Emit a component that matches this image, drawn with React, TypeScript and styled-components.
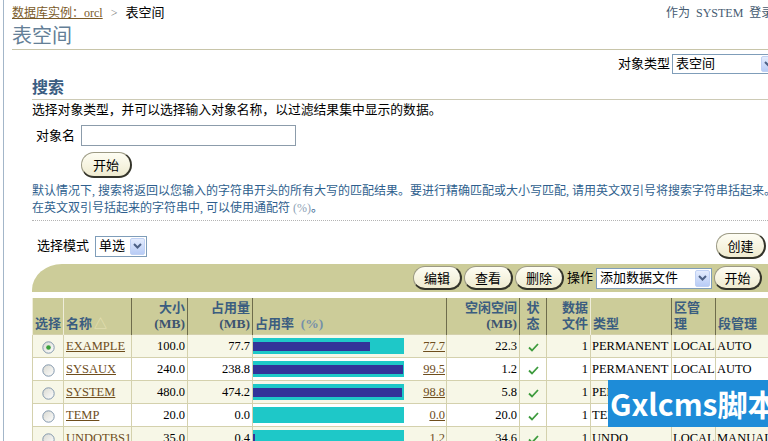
import React from "react";
import styled, { createGlobalStyle } from "styled-components";

const GlobalStyle = createGlobalStyle`
  html, body { margin: 0; padding: 0; background: #fff; overflow: hidden; }
  body {
    font-family: "Liberation Serif", "Noto Sans CJK SC", serif;
    font-size: 13px;
    color: #000;
  }
  #root { width: 768px; height: 441px; overflow: hidden; }
`;

const CJK = `"Liberation Serif", "Noto Sans CJK SC", serif`;

const Root = styled.div`
  position: relative;
  width: 768px;
  height: 441px;
  overflow: hidden;
`;

const Page = styled.div`
  width: 788px;
  min-height: 441px;
  margin-left: 3px;
  border-left: 1px solid #a3b6c9;
  padding-left: 8px;
  font-family: ${CJK};
`;

const TopRow = styled.div`
  display: flex;
  justify-content: space-between;
  padding-top: 5px;
  height: 16px;
  line-height: 16px;
`;

const Crumbs = styled.div`
  display: flex;
  gap: 8px;
  white-space: nowrap;
  font-size: 12px;
`;

const CrumbLink = styled.a`
  color: #7a5a28;
  text-decoration: underline;
`;

const CrumbSep = styled.span`
  color: #777;
`;

const CrumbCurrent = styled.span`
  font-size: 13px;
`;

const Login = styled.div`
  width: 134px;
  color: #445a70;
  white-space: nowrap;
  word-spacing: 3px;
  font-size: 12px;
`;

const Title = styled.h1`
  margin: 2px 0 0;
  font-size: 20px;
  font-weight: normal;
  line-height: 26px;
  color: #647f97;
  border-bottom: 1px solid #c8c5a9;
`;

const TypeRow = styled.div`
  display: flex;
  justify-content: flex-end;
  align-items: center;
  gap: 2px;
  margin-top: 4px;
  padding-right: 22px;
  height: 20px;
`;

const Label = styled.span`
  white-space: nowrap;
  line-height: 16px;
`;

const SelectBox = styled.span<{ $w: number; $h: number }>`
  display: inline-flex;
  align-items: center;
  box-sizing: border-box;
  width: ${(p) => p.$w}px;
  height: ${(p) => p.$h}px;
  border: 1px solid #7f9db9;
  background: #fff;
  padding: 1px 1px 1px 3px;
  line-height: 16px;
  flex-shrink: 0;
`;

const SelectText = styled.span`
  flex: 1;
  white-space: nowrap;
  overflow: hidden;
`;

const SelectArrow = styled.span`
  box-sizing: border-box;
  width: 15px;
  height: 100%;
  background: linear-gradient(#e4ecfd, #b8ccf6);
  border: 1px solid #c0d1f4;
  border-radius: 2px;
  display: flex;
  align-items: center;
  justify-content: center;
`;

const Section = styled.div`
  margin-left: 20px;
  width: 744px;
`;

const SectionTitle = styled.h2`
  margin: 3px 0 0;
  font-size: 16px;
  font-weight: bold;
  line-height: 22px;
  color: #3a5d82;
  border-bottom: 1px solid #cdcab5;
`;

const Desc = styled.div`
  margin-top: 3px;
  line-height: 15px;
  font-size: 12.8px;
  white-space: nowrap;
`;

const FieldRow = styled.div`
  display: flex;
  align-items: center;
  margin-top: 7px;
  padding-left: 4px;
`;

const FieldLabel = styled.span`
  width: 45px;
  line-height: 16px;
`;

const TextInput = styled.input`
  box-sizing: border-box;
  width: 215px;
  height: 21px;
  border: 1px solid #8c9cab;
  margin: 0;
  padding: 0 2px;
`;

const GoRow = styled.div`
  margin-top: 6px;
  padding-left: 49px;
`;

const PillButton = styled.button<{ $h?: number; $w?: number }>`
  box-sizing: border-box;
  height: ${(p) => p.$h ?? 26}px;
  width: ${(p) => p.$w ?? 51}px;
  padding: 0;
  border: 1px solid #9c9a84;
  border-right: 2px solid #34342a;
  border-bottom: 2px solid #34342a;
  border-radius: 14px;
  background: linear-gradient(#fefdf3, #efebd0);
  font-family: "Noto Sans CJK SC", sans-serif;
  font-size: 13px;
  line-height: 15px;
  color: #000;
  flex-shrink: 0;
`;

const Info = styled.div`
  margin-top: 5px;
  line-height: 17px;
  font-size: 12px;
  color: #2f5f8e;
  white-space: nowrap;
`;

const Muted = styled.span`
  color: #8ea3b6;
`;

const Dotted = styled.div`
  margin-top: 3px;
  border-top: 1px dotted #b4b4b4;
`;

const ModeRow = styled.div`
  display: flex;
  justify-content: space-between;
  align-items: center;
  margin-top: 12px;
  height: 26px;
  padding-right: 10px;
`;

const ModeLeft = styled.div`
  display: flex;
  align-items: center;
  gap: 6px;
  padding-left: 5px;
`;

const ActionBar = styled.div`
  margin-top: 5px;
  height: 28px;
  background: #cccc99;
  border-top-left-radius: 30px 26px;
  display: flex;
  justify-content: flex-end;
  align-items: center;
  gap: 2px;
  padding-right: 14px;
`;

const BarLabel = styled.span`
  margin: 0 1px;
  line-height: 16px;
`;

const Table = styled.table`
  margin-top: 5px;
  width: 744px;
  table-layout: fixed;
  border-collapse: collapse;
  font-family: ${CJK};
  font-size: 12.5px;
`;

const Th = styled.th<{ $align?: string; $light?: boolean }>`
  background: #cccc99;
  border-left: 1px solid ${(p) => (p.$light ? "#efedda" : "#6e6c4c")};
  border-top: 1px solid #fff;
  padding: 0 2px 2px;
  height: 34px;
  text-align: ${(p) => p.$align ?? "left"};
  vertical-align: bottom;
  font-weight: bold;
  font-size: 13px;
  color: #3b5d80;
  line-height: 16px;
  white-space: nowrap;
`;

const Unit = styled.span<{ $soft?: boolean }>`
  font-weight: bold;
  font-size: 13.5px;
  color: ${(p) => (p.$soft ? "#7590aa" : "#3d5470")};
`;

const SortMark = styled.span`
  font-weight: normal;
  color: #e8e3b8;
  margin-left: 2px;
`;

const Tr = styled.tr<{ $alt: boolean }>`
  background: ${(p) => (p.$alt ? "#f7f7e7" : "#fff")};
`;

const Td = styled.td<{ $align?: string; $pad?: string }>`
  border: 1px solid #d4d1ad;
  padding: ${(p) => p.$pad ?? "0 2px"};
  height: 22px;
  text-align: ${(p) => p.$align ?? "left"};
  white-space: nowrap;
  overflow: hidden;
  line-height: 16px;
`;

const DataLink = styled.a`
  color: #6e4d1c;
  text-decoration: underline;
`;

const PctWrap = styled.div`
  display: flex;
  align-items: center;
  justify-content: space-between;
`;

const BarTrack = styled.div`
  width: 151px;
  height: 16px;
  background: #1ec8c8;
  display: flex;
  align-items: center;
`;

const BarFill = styled.div`
  height: 9px;
  background: #333399;
`;

const Watermark = styled.div`
  position: absolute;
  left: 608px;
  top: 380px;
  width: 170px;
  height: 47px;
  background: #1e8cd8;
  color: #fff;
  font-family: "Noto Sans CJK SC", "Noto Sans", sans-serif;
  font-weight: bold;
  font-size: 30px;
  line-height: 47px;
  padding-left: 2px;
  box-sizing: border-box;
  white-space: nowrap;
  letter-spacing: 0px;
`;

const Chevron = () => (
  <svg width="9" height="6" viewBox="0 0 9 6">
    <path d="M1 1 L4.5 4.5 L8 1" fill="none" stroke="#4d6185" strokeWidth="2" />
  </svg>
);

const Select = ({ w, h, text }: { w: number; h: number; text: string }) => (
  <SelectBox $w={w} $h={h}>
    <SelectText>{text}</SelectText>
    <SelectArrow>
      <Chevron />
    </SelectArrow>
  </SelectBox>
);

const Radio = ({ checked }: { checked?: boolean }) => (
  <svg width="13" height="13" viewBox="0 0 13 13" style={{ verticalAlign: "middle" }}>
    <defs>
      <linearGradient id="rg" x1="0" y1="0" x2="1" y2="1">
        <stop offset="0" stopColor="#d8d8d0" />
        <stop offset="1" stopColor="#ffffff" />
      </linearGradient>
    </defs>
    <circle cx="6.5" cy="6.5" r="5.7" fill="url(#rg)" stroke="#8398ad" strokeWidth="1" />
    {checked && <circle cx="6.5" cy="6.5" r="2.3" fill="#3aa03a" />}
  </svg>
);

const Check = () => (
  <svg width="11" height="9" viewBox="0 0 11 9" style={{ verticalAlign: "middle" }}>
    <path d="M1 4.5 L4 7.5 L10 1" fill="none" stroke="#3d9b3d" strokeWidth="1.8" />
  </svg>
);

type Row = {
  name: string;
  size: string;
  used: string;
  pct: number;
  free: string;
  files: number;
  type: string;
  ext: string;
  seg: string;
  selected?: boolean;
};

const rows: Row[] = [
  { name: "EXAMPLE", size: "100.0", used: "77.7", pct: 77.7, free: "22.3", files: 1, type: "PERMANENT", ext: "LOCAL", seg: "AUTO", selected: true },
  { name: "SYSAUX", size: "240.0", used: "238.8", pct: 99.5, free: "1.2", files: 1, type: "PERMANENT", ext: "LOCAL", seg: "AUTO" },
  { name: "SYSTEM", size: "480.0", used: "474.2", pct: 98.8, free: "5.8", files: 1, type: "PERMANENT", ext: "LOCAL", seg: "MANUAL" },
  { name: "TEMP", size: "20.0", used: "0.0", pct: 0.0, free: "20.0", files: 1, type: "TEMPORARY", ext: "LOCAL", seg: "MANUAL" },
  { name: "UNDOTBS1", size: "35.0", used: "0.4", pct: 1.2, free: "34.6", files: 1, type: "UNDO", ext: "LOCAL", seg: "MANUAL" },
];

const colWidths = [31, 68, 56, 65, 194, 73, 27, 44, 81, 44, 61];

export default function App() {
  return (
    <Root>
      <GlobalStyle />
      <Page>
        <TopRow>
          <Crumbs>
            <CrumbLink>数据库实例：orcl</CrumbLink>
            <CrumbSep>&gt;</CrumbSep>
            <CrumbCurrent>表空间</CrumbCurrent>
          </Crumbs>
          <Login>作为 SYSTEM 登录</Login>
        </TopRow>
        <Title>表空间</Title>
        <TypeRow>
          <Label>对象类型</Label>
          <Select w={106} h={20} text="表空间" />
        </TypeRow>
        <Section>
          <SectionTitle>搜索</SectionTitle>
          <Desc>选择对象类型，并可以选择输入对象名称，以过滤结果集中显示的数据。</Desc>
          <FieldRow>
            <FieldLabel>对象名</FieldLabel>
            <TextInput />
          </FieldRow>
          <GoRow>
            <PillButton>开始</PillButton>
          </GoRow>
          <Info>
            默认情况下, 搜索将返回以您输入的字符串开头的所有大写的匹配结果。要进行精确匹配或大小写匹配, 请用英文双引号将搜索字符串括起来。
            <br />
            在英文双引号括起来的字符串中, 可以使用通配符 <Muted>(%)</Muted>。
          </Info>
          <Dotted />
          <ModeRow>
            <ModeLeft>
              <Label>选择模式</Label>
              <Select w={52} h={21} text="单选" />
            </ModeLeft>
            <PillButton $w={50}>创建</PillButton>
          </ModeRow>
          <ActionBar>
            <PillButton $h={24} $w={49}>编辑</PillButton>
            <PillButton $h={24} $w={49}>查看</PillButton>
            <PillButton $h={24} $w={49}>删除</PillButton>
            <BarLabel>操作</BarLabel>
            <Select w={116} h={21} text="添加数据文件" />
            <PillButton $h={24} $w={48}>开始</PillButton>
          </ActionBar>
          <Table>
            <colgroup>
              {colWidths.map((w, i) => (
                <col key={i} style={{ width: w }} />
              ))}
            </colgroup>
            <thead>
              <tr>
                <Th $light>选择</Th>
                <Th $light>
                  名称<SortMark>△</SortMark>
                </Th>
                <Th $align="right">
                  大小
                  <br />
                  <Unit>(MB)</Unit>
                </Th>
                <Th $align="right">
                  占用量
                  <br />
                  <Unit>(MB)</Unit>
                </Th>
                <Th>
                  占用率 <Unit $soft>&nbsp;(%)</Unit>
                </Th>
                <Th $align="right">
                  空闲空间
                  <br />
                  <Unit>(MB)</Unit>
                </Th>
                <Th $align="center">
                  状<br />态
                </Th>
                <Th $align="right">
                  数据
                  <br />
                  文件
                </Th>
                <Th $light>类型</Th>
                <Th>
                  区管
                  <br />理
                </Th>
                <Th>段管理</Th>
              </tr>
            </thead>
            <tbody>
              {rows.map((r, i) => (
                <Tr key={r.name} $alt={i % 2 === 0}>
                  <Td $align="center">
                    <Radio checked={r.selected} />
                  </Td>
                  <Td>
                    <DataLink>{r.name}</DataLink>
                  </Td>
                  <Td $align="right">{r.size}</Td>
                  <Td $align="right">{r.used}</Td>
                  <Td $pad="0 1px 0 0">
                    <PctWrap>
                      <BarTrack>
                        <BarFill style={{ width: `${(r.pct / 100) * 151}px` }} />
                      </BarTrack>
                      <DataLink>{r.pct.toFixed(1)}</DataLink>
                    </PctWrap>
                  </Td>
                  <Td $align="right">{r.free}</Td>
                  <Td $align="center">
                    <Check />
                  </Td>
                  <Td $align="right">{r.files}</Td>
                  <Td $pad="0 1px">{r.type}</Td>
                  <Td $pad="0 1px">{r.ext}</Td>
                  <Td $pad="0 1px">{r.seg}</Td>
                </Tr>
              ))}
            </tbody>
          </Table>
        </Section>
      </Page>
      <Watermark>Gxlcms脚本</Watermark>
    </Root>
  );
}
